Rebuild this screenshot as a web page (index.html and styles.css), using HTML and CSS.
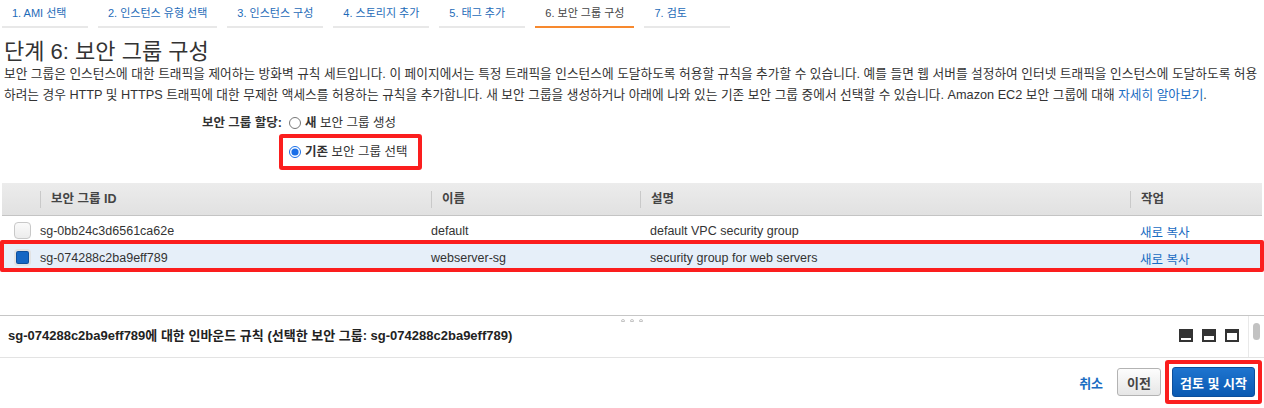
FILE: index.html
```html
<!DOCTYPE html>
<html lang="ko">
<head>
<meta charset="utf-8">
<title>단계 6: 보안 그룹 구성</title>
<link rel="stylesheet" href="styles.css">
</head>
<body>
<nav class="steps">
  <a class="step">1. AMI 선택</a>
  <a class="step">2. 인스턴스 유형 선택</a>
  <a class="step">3. 인스턴스 구성</a>
  <a class="step">4. 스토리지 추가</a>
  <a class="step">5. 태그 추가</a>
  <a class="step active">6. 보안 그룹 구성</a>
  <a class="step">7. 검토</a>
</nav>

<h1 class="title">단계 6: 보안 그룹 구성</h1>
<p class="desc"><span class="line">보안 그룹은 인스턴스에 대한 트래픽을 제어하는 방화벽 규칙 세트입니다. 이 페이지에서는 특정 트래픽을 인스턴스에 도달하도록 허용할 규칙을 추가할 수 있습니다. 예를 들면 웹 서버를 설정하여 인터넷 트래픽을 인스턴스에 도달하도록 허용</span><span class="line">하려는 경우 HTTP 및 HTTPS 트래픽에 대한 무제한 액세스를 허용하는 규칙을 추가합니다. 새 보안 그룹을 생성하거나 아래에 나와 있는 기존 보안 그룹 중에서 선택할 수 있습니다. Amazon EC2 보안 그룹에 대해 <a class="link">자세히 알아보기</a>.</span></p>

<div class="assign">
  <div class="assign-label">보안 그룹 할당:</div>
  <label class="opt"><input type="radio" name="sg"><span><b>새</b> 보안 그룹 생성</span></label>
  <div class="spacer"></div>
  <div class="hl-box"><label class="opt"><input type="radio" name="sg" checked><span><b>기존</b> 보안 그룹 선택</span></label></div>
</div>

<div class="grid">
  <div class="grow ghead">
    <div class="gc"></div>
    <div class="gc hc">보안 그룹 ID</div>
    <div class="gc hc">이름</div>
    <div class="gc hc">설명</div>
    <div class="gc hc">작업</div>
  </div>
  <div class="grow body">
    <div class="gc cbc"><span class="cb"></span></div>
    <div class="gc c-id">sg-0bb24c3d6561ca62e</div>
    <div class="gc c-name">default</div>
    <div class="gc c-desc">default VPC security group</div>
    <div class="gc c-act"><a class="link">새로 복사</a></div>
  </div>
  <div class="grow body sel">
    <div class="gc cbc"><span class="cb on"></span></div>
    <div class="gc c-id">sg-074288c2ba9eff789</div>
    <div class="gc c-name">webserver-sg</div>
    <div class="gc c-desc">security group for web servers</div>
    <div class="gc c-act"><a class="link">새로 복사</a></div>
  </div>
</div>

<section class="panel">
  <div class="handle"><i></i><i></i><i></i></div>
  <div class="panel-title">sg-074288c2ba9eff789에 대한 인바운드 규칙 (선택한 보안 그룹: sg-074288c2ba9eff789)</div>
  <div class="panel-icons">
    <svg width="14" height="13" viewBox="0 0 14 13"><rect width="14" height="13" fill="#333"/><rect x="2" y="9" width="10" height="2" fill="#fff"/></svg>
    <svg width="14" height="13" viewBox="0 0 14 13"><rect width="14" height="13" fill="#333"/><rect x="2" y="7" width="10" height="4" fill="#fff"/></svg>
    <svg width="14" height="13" viewBox="0 0 14 13"><rect width="14" height="13" fill="#333"/><rect x="2" y="4" width="10" height="7" fill="#fff"/></svg>
  </div>
  <div class="panel-scroll"><span class="thumb"></span></div>
</section>

<footer class="actions">
  <a class="link cancel">취소</a>
  <button class="btn">이전</button>
  <div class="hl-btn"><button class="btn primary">검토 및 시작</button></div>
</footer>
</body>
</html>
```
FILE: styles.css
```css
* { box-sizing: border-box; }
body {
  margin: 0;
  width: 1264px;
  height: 408px;
  overflow: hidden;
  background: #fff;
  color: #333;
  font-family: "Liberation Sans", "Noto Sans CJK KR", sans-serif;
}
.link { color: #1a6cc2; cursor: pointer; }

.steps { display: flex; gap: 10px; padding-left: 2px; height: 28px; }
.step {
  min-width: 86px;
  height: 28px;
  padding: 4px 10px 0;
  border-bottom: 2px solid #e8e8e8;
  font-size: 11px;
  color: #1e6bb8;
  white-space: nowrap;
}
.step.active { color: #444; border-bottom-color: #f7892e; }

.title {
  margin: 12px 0 0 4px;
  font-size: 22px;
  line-height: 24px;
  font-weight: normal;
  color: #333;
}
.desc {
  margin: 0 0 0 4px;
  font-size: 12.7px;
  line-height: 21px;
  color: #333;
}
.desc .line { display: block; white-space: nowrap; }

.assign {
  display: grid;
  grid-template-columns: 289px auto;
  justify-content: start;
  align-items: center;
  margin-top: 7px;
  font-size: 12.5px;
}
.assign-label { text-align: right; padding-right: 7px; font-weight: bold; line-height: 20px; }
.opt { display: flex; align-items: center; gap: 4px; line-height: 20px; white-space: nowrap; }
.opt input { margin: 0; width: 12px; height: 12px; accent-color: #1a6fe8; }
.hl-box {
  margin: 1px 0 0 -10px;
  border: 4px solid #fb1e1e;
  border-radius: 3px;
  padding: 4px 11px 4px 6px;
}

.grid { margin: 13px 2px 0 2px; font-size: 12.5px; }
.grow {
  display: grid;
  grid-template-columns: 38px 391px 209px 490px 1fr;
  align-items: center;
  height: 27px;
  border-bottom: 1px solid #eaeaea;
}
.grow.body { padding-top: 4px; }
.ghead {
  height: 33px;
  background: linear-gradient(#ececec, #e1e1e1);
  border-bottom: 1px solid #c4c4c4;
  font-weight: bold;
  color: #444;
}
.hc { border-left: 1px solid #c9c9c9; padding-left: 10px; line-height: 17px; }
.c-desc { padding-left: 10px; }
.c-act { padding-left: 10px; }
.grow.sel { position: relative; background: #e6eff9; }
.grow.sel::after {
  content: "";
  position: absolute;
  left: -2px; right: -2px; top: -3px; bottom: -3px;
  border: 4px solid #fb1e1e;
  border-radius: 2px;
}
.cbc { display: flex; justify-content: center; padding-left: 2px; margin-top: -2px; }
.cb {
  width: 17px; height: 17px;
  border-radius: 4px;
  border: 1px solid #c8c8c8;
  background: linear-gradient(#fafafa, #ececec);
}
.cb.on {
  border: 2px solid #e2e2e2;
  background: #1466c4;
  box-shadow: inset 0 0 0 1px #0d4f9c;
}

.panel {
  position: relative;
  display: flex;
  align-items: center;
  margin-top: 45px;
  height: 43px;
  border-top: 1px solid #c6c6c6;
  border-bottom: 1px solid #e3e3e3;
}
.handle { position: absolute; top: 3px; left: 621px; display: flex; gap: 5px; }
.handle i { width: 4px; height: 3px; border: 1px solid #c4c4c4; border-radius: 2px 2px 0 0; }
.panel-title { flex: 1; padding: 0 0 5px 8px; font-size: 13px; font-weight: bold; color: #222; }
.panel-icons { display: flex; gap: 9px; margin: 0 9px 3px 0; }
.panel-scroll {
  align-self: stretch;
  width: 15px;
  border-left: 1px solid #e9e9e9;
  margin-right: 1px;
  padding: 7px 0 0 4px;
}
.thumb { display: block; width: 7px; height: 17px; border-radius: 4px; background: #c2c2c2; }

.actions {
  display: flex;
  align-items: center;
  justify-content: flex-end;
  height: 48px;
  padding-right: 2px;
}
.cancel { font-size: 13px; font-weight: bold; margin-right: 14px; }
.btn {
  font-family: inherit;
  font-size: 13px;
  font-weight: bold;
  height: 28px;
  padding: 0 9px;
  border-radius: 3px;
  border: 1px solid #b3b3b3;
  background: linear-gradient(#fdfdfd, #e6e6e6);
  color: #444;
}
.hl-btn {
  margin-left: 4px;
  border: 4px solid #fb1e1e;
  border-radius: 3px;
  padding: 3px;
}
.btn.primary {
  height: 30px;
  padding: 0 7px;
  border-color: #0c4f9c;
  background: linear-gradient(#1e74cf, #0a5ab2);
  color: #fff;
}
```
